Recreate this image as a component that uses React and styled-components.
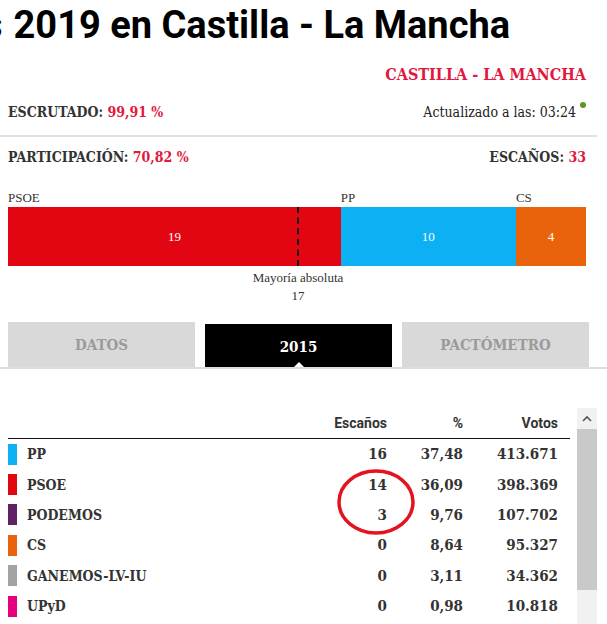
import React from 'react';
import styled, { createGlobalStyle } from 'styled-components';

const GlobalStyle = createGlobalStyle`
  body {
    margin: 0;
    background: #fff;
    font-family: "DejaVu Serif Condensed", "DejaVu Serif", serif;
    color: #333;
  }
`;

const SLAB = `"DejaVu Serif Condensed", "DejaVu Serif", serif`;

const Page = styled.div`
  width: 607px;
  height: 624px;
  overflow: hidden;
`;

const Title = styled.h1`
  margin: 0;
  padding-top: 3px;
  height: 44px;
  line-height: 44px;
  font-family: Roboto, "Liberation Sans", sans-serif;
  font-weight: 700;
  font-size: 38px;
  color: #000;
  white-space: nowrap;
`;

const Cut = styled.span`
  display: inline-block;
  margin-left: -17px;
  margin-right: 11px;
`;

const Header = styled.div`
  padding: 0 21px 0 8px;
`;

const Region = styled.div`
  margin-top: 18px;
  height: 20px;
  line-height: 20px;
  text-align: right;
  font-family: ${SLAB};
  font-weight: 700;
  font-size: 16px;
  color: #e2173d;
`;

const StatRow = styled.div`
  display: flex;
  justify-content: space-between;
  align-items: center;
  margin-top: ${p => p.$top}px;
  height: 20px;
  line-height: 20px;
  font-family: ${SLAB};
  font-weight: 700;
  font-size: 14px;
  color: #333;
`;

const Red = styled.span`
  color: #e2173d;
`;

const Updated = styled.span`
  position: relative;
  font-weight: 400;
  font-size: 14px;
  color: #222;
  padding-right: 10px;
`;

const Dot = styled.i`
  position: absolute;
  right: 0;
  top: 0;
  width: 6px;
  height: 6px;
  border-radius: 50%;
  background: #5a9b1c;
`;

const Divider = styled.div`
  margin-top: 13px;
  width: 597px;
  height: 2px;
  background: #e2e2e2;
`;

const BarWrap = styled.div`
  margin: 23px 21px 0 8px;
`;

const Bar = styled.div`
  position: relative;
  display: flex;
`;

const Segment = styled.div`
  flex: ${p => p.$seats} 0 0;
  display: flex;
  flex-direction: column;
`;

const SegLabel = styled.div`
  height: 16px;
  line-height: 16px;
  margin-bottom: 1px;
  font-family: "Liberation Serif", serif;
  font-size: 13px;
  color: #333;
`;

const SegBlock = styled.div`
  height: 59px;
  display: flex;
  align-items: center;
  justify-content: center;
  background: ${p => p.$color};
  font-family: "Liberation Serif", serif;
  font-size: 13px;
  color: #fff;
`;

const MajorityLine = styled.div`
  position: absolute;
  left: 50%;
  top: 17px;
  height: 59px;
  border-left: 2px dashed #111;
`;

const Majority = styled.div`
  margin: 3px 0 0 calc(50% - 100px);
  width: 202px;
  text-align: center;
  font-family: "Liberation Serif", serif;
  font-size: 13px;
  line-height: 18px;
  color: #333;
`;

const Tabs = styled.div`
  margin-top: 17px;
  width: 600px;
  height: 45px;
  display: flex;
  align-items: flex-end;
  gap: 10px;
  padding-left: 8px;
  border-bottom: 2px solid #dedede;
  box-sizing: content-box;
`;

const Tab = styled.div`
  position: relative;
  width: 187px;
  height: ${p => (p.$active ? 43 : 45)}px;
  display: flex;
  align-items: center;
  justify-content: center;
  background: ${p => (p.$active ? '#000' : '#d9d9d9')};
  color: ${p => (p.$active ? '#fff' : '#9a9a9a')};
  font-family: ${SLAB};
  font-weight: 700;
  font-size: 15px;
  padding-top: ${p => (p.$active ? 2 : 0)}px;
  box-sizing: border-box;
`;

const Notch = styled.i`
  position: absolute;
  left: 50%;
  bottom: 0;
  margin-left: -5px;
  border-left: 5px solid transparent;
  border-right: 5px solid transparent;
  border-bottom: 5px solid #fff;
`;

const TableArea = styled.div`
  margin-top: 36px;
  display: flex;
  gap: 7px;
  padding-left: 8px;
`;

const Table = styled.div`
  position: relative;
  width: 562px;
`;

const Row = styled.div`
  display: grid;
  grid-template-columns: 1fr 60px 76px 95px;
  padding-right: 12px;
  align-items: center;
  height: 30.4px;
`;

const HeadRow = styled(Row)`
  height: auto;
  padding-top: 8px;
  padding-bottom: 5px;
  line-height: 20px;
  border-bottom: 1px solid #111;
  font-family: Roboto, "Liberation Sans", sans-serif;
  font-weight: 700;
  font-size: 14px;
  color: #333;
`;

const Cell = styled.div`
  text-align: right;
  font-family: ${SLAB};
  font-weight: 700;
  font-size: 15px;
  color: #333;
`;

const HeadCell = styled.div`
  text-align: right;
`;

const Party = styled.div`
  display: flex;
  align-items: center;
  gap: 10px;
  font-family: ${SLAB};
  font-weight: 700;
  font-size: 14px;
  color: #333;
`;

const Swatch = styled.span`
  width: 9px;
  height: 21px;
  background: ${p => p.$color};
`;

const Circle = styled.svg`
  position: absolute;
  left: 328px;
  top: 62px;
`;

const Scrollbar = styled.div`
  width: 20px;
  height: 225px;
  margin-top: 3px;
  background: #f1f1f1;
  display: flex;
  flex-direction: column;
`;

const ScrollBtn = styled.div`
  height: 21px;
  display: flex;
  align-items: center;
  justify-content: center;
`;

const Thumb = styled.div`
  height: 161px;
  background: #c9c9c9;
`;

const bar = [
  { name: 'PSOE', seats: 19, color: '#e20613' },
  { name: 'PP', seats: 10, color: '#0db0f2' },
  { name: 'CS', seats: 4, color: '#e8630c' },
];

const rows = [
  { name: 'PP', color: '#0db0f2', seats: 16, pct: '37,48', votes: '413.671' },
  { name: 'PSOE', color: '#e20613', seats: 14, pct: '36,09', votes: '398.369' },
  { name: 'PODEMOS', color: '#612061', seats: 3, pct: '9,76', votes: '107.702' },
  { name: 'CS', color: '#e8630c', seats: 0, pct: '8,64', votes: '95.327' },
  { name: 'GANEMOS-LV-IU', color: '#a3a3a3', seats: 0, pct: '3,11', votes: '34.362' },
  { name: 'UPyD', color: '#e6007e', seats: 0, pct: '0,98', votes: '10.818' },
];

export default function App() {
  return (
    <Page>
      <GlobalStyle />
      <Title><Cut>s</Cut>2019 en Castilla - La Mancha</Title>

      <Header>
        <Region>CASTILLA - LA MANCHA</Region>
        <StatRow $top={17}>
          <span>ESCRUTADO: <Red>99,91 %</Red></span>
          <Updated>Actualizado a las: 03:24<Dot /></Updated>
        </StatRow>
      </Header>
      <Divider />
      <Header>
        <StatRow $top={10}>
          <span>PARTICIPACIÓN: <Red>70,82 %</Red></span>
          <span>ESCAÑOS: <Red>33</Red></span>
        </StatRow>
      </Header>

      <BarWrap>
        <Bar>
          {bar.map(b => (
            <Segment key={b.name} $seats={b.seats}>
              <SegLabel>{b.name}</SegLabel>
              <SegBlock $color={b.color}>{b.seats}</SegBlock>
            </Segment>
          ))}
          <MajorityLine />
        </Bar>
        <Majority>
          Mayoría absoluta<br />17
        </Majority>
      </BarWrap>

      <Tabs>
        <Tab>DATOS</Tab>
        <Tab $active>2015<Notch /></Tab>
        <Tab>PACTÓMETRO</Tab>
      </Tabs>

      <TableArea>
        <Table>
          <HeadRow>
            <span />
            <HeadCell>Escaños</HeadCell>
            <HeadCell>%</HeadCell>
            <HeadCell>Votos</HeadCell>
          </HeadRow>
          {rows.map(r => (
            <Row key={r.name}>
              <Party><Swatch $color={r.color} />{r.name}</Party>
              <Cell>{r.seats}</Cell>
              <Cell>{r.pct}</Cell>
              <Cell>{r.votes}</Cell>
            </Row>
          ))}
          <Circle width="80" height="70" viewBox="0 0 80 70">
            <ellipse cx="40" cy="35" rx="37" ry="31" fill="none" stroke="#e3141f" strokeWidth="3.5" />
          </Circle>
        </Table>
        <Scrollbar>
          <ScrollBtn>
            <svg width="10" height="7" viewBox="0 0 10 7">
              <path d="M1 6 L5 2 L9 6" fill="none" stroke="#555" strokeWidth="1.6" />
            </svg>
          </ScrollBtn>
          <Thumb />
        </Scrollbar>
      </TableArea>
    </Page>
  );
}
